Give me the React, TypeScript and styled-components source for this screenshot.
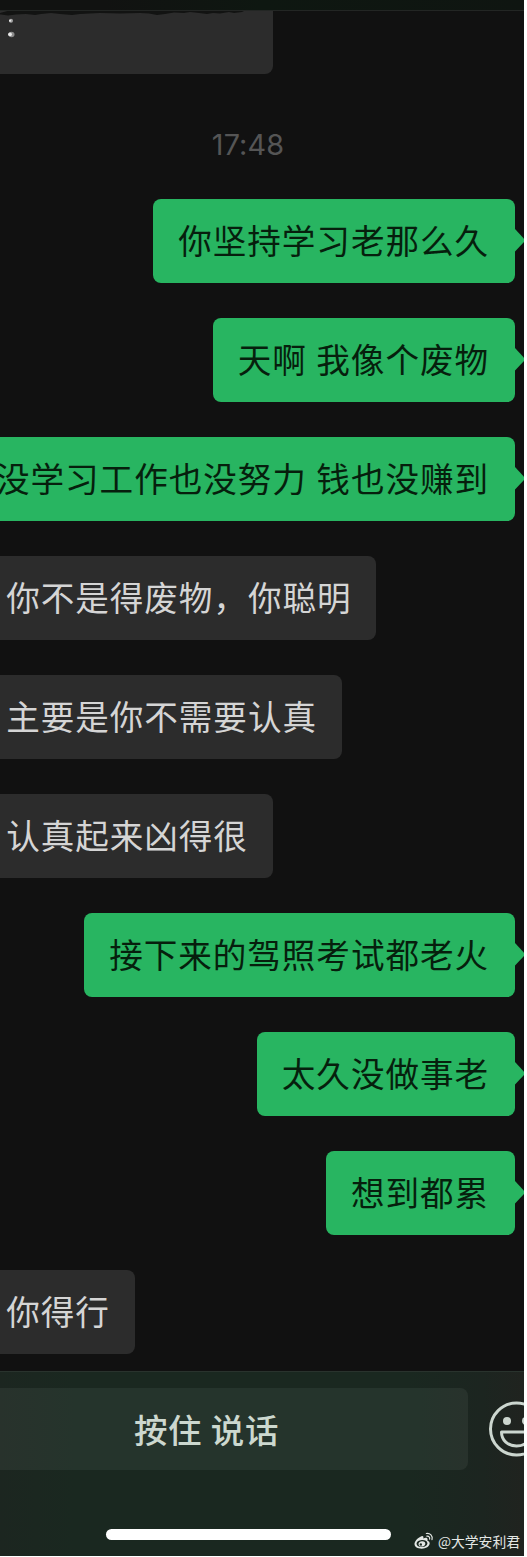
import React from "react";
import styled, { createGlobalStyle } from "styled-components";

const GlobalStyle = createGlobalStyle`
  html, body { margin: 0; background: #fff; }
  * { box-sizing: border-box; }
`;

const Screen = styled.main`
  width: 524px;
  height: 1556px;
  overflow: hidden;
  display: flex;
  flex-direction: column;
  background: #111111;
  font-family: "Noto Sans CJK SC", sans-serif;
`;

const HeaderEdge = styled.header`
  flex: none;
  height: 11px;
  background: linear-gradient(90deg, #111211 0%, #111211 20%, #0e1711 50%, #0f1511 100%);
  border-bottom: 1px solid #232624;
`;

const Chat = styled.section`
  flex: none;
  height: 1360px;
  display: flex;
  flex-direction: column;
  overflow: hidden;
`;

const ClippedBubble = styled.div`
  position: relative;
  flex: none;
  width: 273px;
  height: 63px;
  background: #2c2c2c;
  border-radius: 0 0 8px 0;
`;

const Smudge = styled.svg`
  position: absolute;
  left: 0;
  top: -1px;
`;

const Time = styled.time`
  flex: none;
  height: 40px;
  margin: 50px 0 35px;
  padding-right: 28px;
  text-align: center;
  font: 400 28.8px/41px Inter, sans-serif;
  letter-spacing: 0.1px;
  color: #555555;
`;

const Messages = styled.div`
  display: flex;
  flex-direction: column;
  gap: 35px;
`;

const Row = styled.div<{ $mine: boolean }>`
  display: flex;
  justify-content: ${(p) => (p.$mine ? "flex-end" : "flex-start")};
  padding-right: 9px;
`;

const Bubble = styled.div<{ $mine: boolean }>`
  position: relative;
  flex: none;
  height: 84px;
  padding: ${(p) => (p.$mine ? "0 26px 0 24.8px" : "0 24.8px 0 6.2px")};
  border-radius: ${(p) => (p.$mine ? "8px" : "0 8px 8px 0")};
  background: ${(p) => (p.$mine ? "#28b561" : "#2c2c2c")};
  color: ${(p) => (p.$mine ? "#061f0d" : "#d5d5d5")};
  font-size: 33.6px;
  font-weight: 400;
  line-height: 82px;
  letter-spacing: 0.95px;
  word-spacing: 1.1px;
  white-space: nowrap;
`;

const Tail = styled.svg`
  position: absolute;
  right: -9px;
  top: 30px;
`;

const Composer = styled.footer`
  flex: 1;
  display: flex;
  flex-direction: column;
  border-top: 1px solid #29332d;
  background: linear-gradient(90deg, #1c2620 0%, #1a2820 14%, #1a2820 78%, #1c2520 92%, #20231f 100%);
`;

const ComposerRow = styled.div`
  display: flex;
  align-items: center;
  height: 82px;
  margin-top: 16px;
`;

const HoldToTalk = styled.button`
  flex: none;
  width: 468px;
  height: 82px;
  padding: 0 55px 1px 0;
  border: 0;
  border-radius: 0 8px 8px 0;
  background: linear-gradient(90deg, #28322c 0%, #25342c 16%, #25342c 90%, #28322c 100%);
  color: #ccd8cf;
  font: 500 33.5px/81px "Noto Sans CJK SC", sans-serif;
  letter-spacing: 0.6px;
  word-spacing: 0.6px;
  white-space: nowrap;
`;

const Smile = styled.svg`
  flex: none;
  margin-left: 20px;
`;

const BottomArea = styled.div`
  position: relative;
  flex: 1;
  padding: 59px 0 0 106px;
`;

const HomeBar = styled.div`
  width: 285px;
  height: 11px;
  border-radius: 6px;
  background: #fff;
`;

const Watermark = styled.div`
  position: absolute;
  right: 4px;
  bottom: 4px;
  display: flex;
  align-items: center;
  gap: 4px;
  color: #e4e8e5;
  font-size: 13.8px;
  line-height: 22px;
  white-space: nowrap;
`;

const messages: { text: string; mine: boolean }[] = [
  { text: "你坚持学习老那么久", mine: true },
  { text: "天啊 我像个废物", mine: true },
  { text: "没学习工作也没努力 钱也没赚到", mine: true },
  { text: "你不是得废物，你聪明", mine: false },
  { text: "主要是你不需要认真", mine: false },
  { text: "认真起来凶得很", mine: false },
  { text: "接下来的驾照考试都老火", mine: true },
  { text: "太久没做事老", mine: true },
  { text: "想到都累", mine: true },
  { text: "你得行", mine: false },
];

function WeiboMark() {
  return (
    <svg width="20" height="18" viewBox="0 0 20 18" fill="none">
      <path
        fill="currentColor"
        fillRule="evenodd"
        d="M7.6 4.2C9 3.8 9.8 4.7 9.3 6.4c2.4-1 4.4-.8 4.3 1.3 0 .4-.1.7-.2 1 1.6.5 2.4 1.5 2.3 2.9-.3 3-3.8 5.1-8 5.1-4.1 0-7.2-1.9-7.2-4.7C.5 9 4.6 5 7.6 4.2ZM7.9 8c-3.2.2-5.5 1.900-5.300 4 .2 2 2.600 3.300 5.600 3 3.100-.2 5.400-2 5.200-4.100C13.200 9 10.900 7.800 7.900 8Z"
      />
      <path
        fill="currentColor"
        fillRule="evenodd"
        d="M7.9 9.2c2.2-.2 3.7 1 3.4 2.7-.3 1.6-2 2.8-3.900 2.700-1.900-.1-3.100-1.300-2.900-2.900.3-1.400 1.700-2.400 3.400-2.500Zm-1.200 2.100a1.200 1.200 0 1 0 .2 2.400 1.200 1.200 0 0 0-.2-2.400Z"
      />
      <path
        d="M12.3 1.5c3.7-.7 6.8 2.4 5.7 6.1M12.9 4.2c1.9-.3 3.2 1.1 2.7 2.9"
        stroke="currentColor"
        strokeWidth="1.2"
        strokeLinecap="round"
      />
    </svg>
  );
}

export default function App() {
  return (
    <>
      <GlobalStyle />
      <Screen>
        <HeaderEdge />
        <Chat>
          <ClippedBubble>
            <Smudge width="273" height="34" viewBox="0 0 273 34">
              <path
                d="M11 0H246L242 2l-8 1-5-1-9 1.500-7-.5-6 1-8-1-9-1-6 1-10-.5-9 1.500-8 1-8-1.500-9-.5-20 .5-20-.5-20 1-8 1-12-1-9-1-10 1-6 1-9-1-10 .5-8 1-7-1-8 .5Z"
                fill="#121312"
              />
              <circle cx="11" cy="10.7" r="2" fill="#a5a5a5" />
              <circle cx="10" cy="10.7" r="1" fill="#eeeeee" />
              <ellipse cx="11.5" cy="24.5" rx="3" ry="2.8" fill="#8a8a8a" />
              <circle cx="10" cy="24.3" r="1.9" fill="#e8e8e8" />
            </Smudge>
          </ClippedBubble>
          <Time>17:48</Time>
          <Messages>
            {messages.map((m) => (
              <Row key={m.text} $mine={m.mine}>
                <Bubble $mine={m.mine}>
                  {m.text}
                  {m.mine && (
                    <Tail width="10" height="23" viewBox="0 0 10 23">
                      <path d="M0 0H1L10 9.7V13L1 22.5H0Z" fill="#28b561" />
                    </Tail>
                  )}
                </Bubble>
              </Row>
            ))}
          </Messages>
        </Chat>
        <Composer>
          <ComposerRow>
            <HoldToTalk type="button">按住 说话</HoldToTalk>
            <Smile width="56" height="56" viewBox="0 0 56 56" fill="none">
              <circle cx="28.5" cy="28" r="26" stroke="#ccd6cf" strokeWidth="3" />
              <circle cx="19" cy="20" r="4" fill="#ccd6cf" />
              <circle cx="38" cy="20" r="4" fill="#ccd6cf" />
              <path
                d="M13.500 31H43.500C43.500 39.500 37 45 28.500 45S13.500 39.500 13.500 31Z"
                stroke="#ccd6cf"
                strokeWidth="3"
                strokeLinejoin="round"
              />
            </Smile>
          </ComposerRow>
          <BottomArea>
            <HomeBar />
            <Watermark>
              <WeiboMark />
              @大学安利君
            </Watermark>
          </BottomArea>
        </Composer>
      </Screen>
    </>
  );
}
